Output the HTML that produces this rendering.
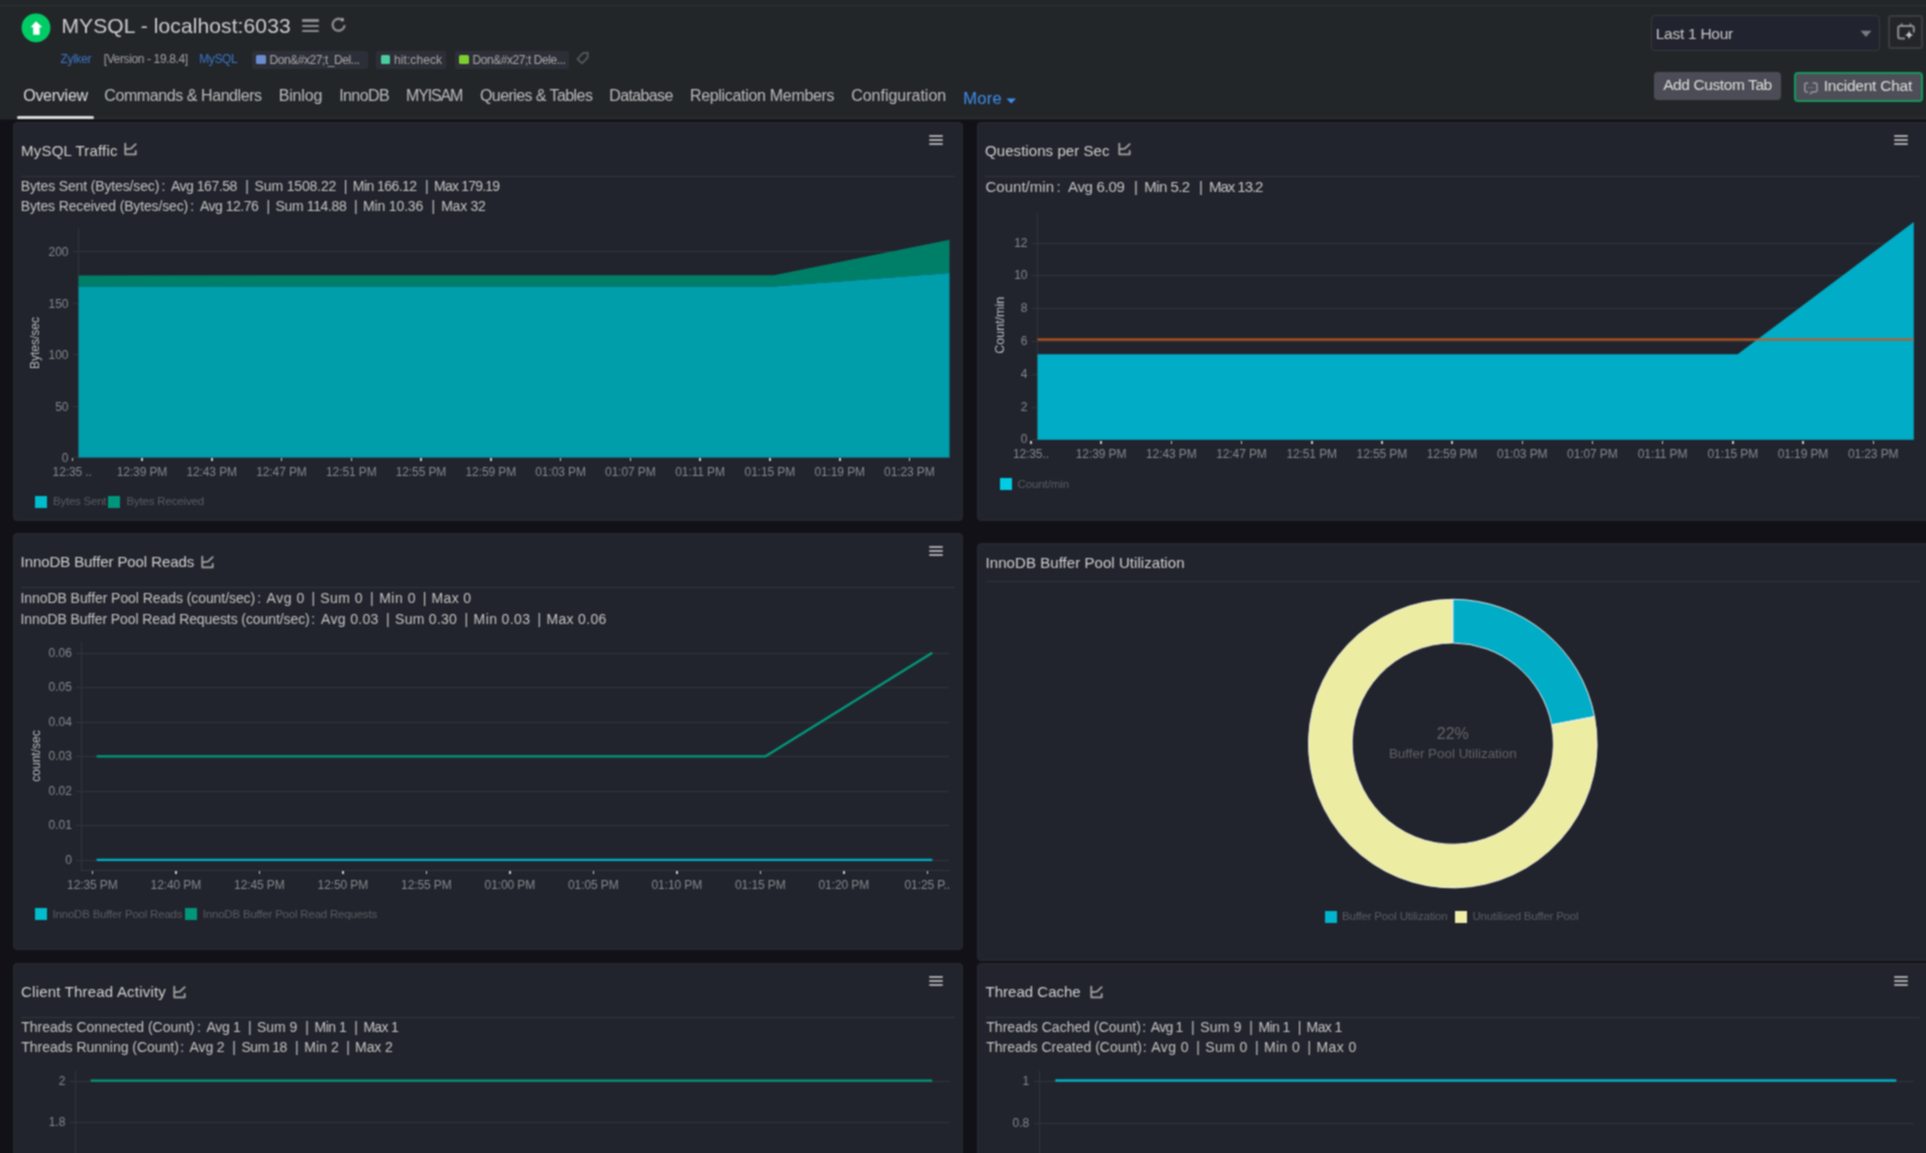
<!DOCTYPE html><html><head><meta charset="utf-8"><style>
html,body{margin:0;padding:0;background:#111117;}
#root{position:relative;filter:url(#gb);width:1926px;height:1153px;overflow:hidden;background:#111117;font-family:"Liberation Sans",sans-serif;}
.t{position:absolute;white-space:nowrap;line-height:1;}
.r{position:absolute;}
svg{position:absolute;overflow:visible;}
</style></head><body><svg width="0" height="0" style="position:absolute"><filter id="gb" x="0" y="0" width="100%" height="100%" color-interpolation-filters="sRGB"><feConvolveMatrix order="3" kernelMatrix="1 2 1 2 4 2 1 2 1" divisor="16" edgeMode="duplicate"/></filter></svg><div id="root">
<div class="r" style="left:0px;top:0px;width:1926px;height:120px;background:#232629;"></div>
<div class="r" style="left:0px;top:5px;width:1926px;height:1px;background:#2f3134;"></div>
<svg style="left:21px;top:13px" width="30" height="30" viewBox="0 0 30 30"><circle cx="15" cy="14.8" r="14.4" fill="#00cc66"/><path d="M15 8.2 L21.3 14.2 L18.6 14.2 L18.6 21.8 L12.2 21.8 L12.2 14.2 L9.6 14.2 Z" fill="#ffffff"/></svg>
<div class="t" style="left:61.5px;top:15.4px;font-size:21px;color:#cdcdcd;letter-spacing:0.108px;">MYSQL - localhost:6033</div>
<div class="r" style="left:302px;top:19.3px;width:17px;height:2.4px;background:#8a8b8c;border-radius:1px"></div>
<div class="r" style="left:302px;top:24.5px;width:17px;height:2.4px;background:#8a8b8c;border-radius:1px"></div>
<div class="r" style="left:302px;top:29.7px;width:17px;height:2.4px;background:#8a8b8c;border-radius:1px"></div>
<svg style="left:330px;top:17px" width="18" height="16" viewBox="0 0 18 16"><path d="M14.6 8.2 A6 6 0 1 1 10.6 2.1" fill="none" stroke="#8a8b8c" stroke-width="2.3"/><circle cx="12.2" cy="2.7" r="1.9" fill="#9a9b9c"/></svg>
<div class="t" style="left:60.4px;top:53.0px;font-size:12px;color:#3a74c8;letter-spacing:-0.293px;">Zylker</div>
<div class="t" style="left:103.7px;top:53.0px;font-size:12px;color:#a0a0a0;letter-spacing:-0.372px;">[Version - 19.8.4]</div>
<div class="t" style="left:199.2px;top:53.0px;font-size:12px;color:#3a74c8;letter-spacing:-0.402px;">MySQL</div>
<div class="r" style="left:251.6px;top:51px;width:116.4px;height:18px;background:#2c2f37;border-radius:2px"></div>
<div class="r" style="left:256.4px;top:55.3px;width:9.2px;height:9px;background:#6a8cce;border-radius:1.5px"></div>
<div class="t" style="left:269.5px;top:53.6px;font-size:12px;color:#a8a8a8;letter-spacing:-0.437px;">Don&amp;#x27;t_Del...</div>
<div class="r" style="left:376px;top:51px;width:69.6px;height:18px;background:#2c2f37;border-radius:2px"></div>
<div class="r" style="left:380.8px;top:55.3px;width:9.2px;height:9px;background:#4bcca0;border-radius:1.5px"></div>
<div class="t" style="left:393.9px;top:53.6px;font-size:12px;color:#a8a8a8;letter-spacing:0.106px;">hit:check</div>
<div class="r" style="left:454.6px;top:51px;width:114.7px;height:18px;background:#2c2f37;border-radius:2px"></div>
<div class="r" style="left:459.40000000000003px;top:55.3px;width:9.2px;height:9px;background:#7ccf2e;border-radius:1.5px"></div>
<div class="t" style="left:472.5px;top:53.6px;font-size:12px;color:#a8a8a8;letter-spacing:-0.437px;">Don&amp;#x27;t Dele...</div>
<svg style="left:574px;top:49px" width="18" height="18" viewBox="0 0 18 18"><path d="M3.4 10 L9 4.1 L13.8 3.6 L13.6 8.6 L8 14.4 Z" fill="none" stroke="#55585b" stroke-width="1.8" stroke-linejoin="round"/></svg>
<div class="t" style="left:23.2px;top:87.6px;font-size:16px;color:#dcdcdc;letter-spacing:-0.254px;">Overview</div>
<div class="t" style="left:104.3px;top:87.6px;font-size:16px;color:#bcbcbc;letter-spacing:-0.422px;">Commands &amp; Handlers</div>
<div class="t" style="left:278.7px;top:87.6px;font-size:16px;color:#bcbcbc;letter-spacing:-0.155px;">Binlog</div>
<div class="t" style="left:339.2px;top:87.6px;font-size:16px;color:#bcbcbc;letter-spacing:-0.593px;">InnoDB</div>
<div class="t" style="left:406.0px;top:87.6px;font-size:16px;color:#bcbcbc;letter-spacing:-1.144px;">MYISAM</div>
<div class="t" style="left:480.0px;top:87.6px;font-size:16px;color:#bcbcbc;letter-spacing:-0.576px;">Queries &amp; Tables</div>
<div class="t" style="left:609.3px;top:87.6px;font-size:16px;color:#bcbcbc;letter-spacing:-0.642px;">Database</div>
<div class="t" style="left:689.9px;top:87.6px;font-size:16px;color:#bcbcbc;letter-spacing:-0.31px;">Replication Members</div>
<div class="t" style="left:851.2px;top:87.6px;font-size:16px;color:#bcbcbc;letter-spacing:-0.014px;">Configuration</div>
<div class="t" style="left:963.2px;top:89.6px;font-size:16.5px;color:#3d8ff0;letter-spacing:0.286px;">More</div>
<svg style="left:1006px;top:98px" width="11" height="6" viewBox="0 0 11 6"><path d="M0.5 0.5 L10 0.5 L5.25 5.5 Z" fill="#3d8ff0"/></svg>
<div class="r" style="left:17px;top:116px;width:77px;height:3px;background:#d5d7d7;border-radius:1.5px"></div>
<div class="r" style="left:94px;top:117px;width:1832px;height:2px;background:#282b2e;"></div>
<div class="r" style="left:0px;top:119px;width:1926px;height:1px;background:#1a1b1f;"></div>
<div class="r" style="left:1651px;top:15px;width:229px;height:36px;background:#21242e;box-sizing:border-box;border:1px solid #35383d;border-radius:4px"></div>
<div class="t" style="left:1655.7px;top:25.8px;font-size:15.5px;color:#c8c8c8;letter-spacing:-0.258px;">Last 1 Hour</div>
<svg style="left:1860px;top:30px" width="12" height="8" viewBox="0 0 12 8"><path d="M0.5 0.8 L11.5 0.8 L6 7 Z" fill="#777a7e"/></svg>
<div class="r" style="left:1888px;top:14.5px;width:35px;height:34.5px;background:transparent;box-sizing:border-box;border:2px solid #393b40;border-radius:3px"></div>
<svg style="left:1896px;top:22px" width="20" height="20" viewBox="0 0 20 20"><path d="M9 16.6 H4.2 Q2.2 16.6 2.2 14.6 V6 Q2.2 4 4.2 4 H15.8 Q17.8 4 17.8 6 V10.5" fill="none" stroke="#8a8c8e" stroke-width="2"/><path d="M5.7 1.6 V4 M14.4 1.6 V4" stroke="#8a8c8e" stroke-width="2"/><path d="M13.1 8.2 Q13.6 12.3 17.4 12.9 Q13.6 13.5 13.1 17.6 Q12.6 13.5 8.8 12.9 Q12.6 12.3 13.1 8.2 Z" fill="#c4c4c4"/></svg>
<div class="r" style="left:1654px;top:71.5px;width:127px;height:28.5px;background:#4b4c55;border-radius:4px"></div>
<div class="t" style="left:1663.2px;top:77.3px;font-size:15.5px;color:#dedede;letter-spacing:-0.404px;">Add Custom Tab</div>
<div class="r" style="left:1794px;top:71.5px;width:129px;height:30.5px;background:#4e4e58;box-sizing:border-box;border:2px solid #13985a;border-radius:4px"></div>
<svg style="left:1803px;top:82px" width="16" height="14" viewBox="0 0 16 14"><path d="M5 9.8 H3.4 Q1.8 9.8 1.8 8.2 V2.8 Q1.8 1.2 3.4 1.2 H5.2 M9.6 1.2 H12.4 Q14 1.2 14 2.8 V8.2 Q14 9.8 12.4 9.8 H10 Q8 9.8 7.2 12.2" fill="none" stroke="#8e8f95" stroke-width="1.7"/><path d="M5 5.6 H11" stroke="#6e6f75" stroke-width="1.2"/></svg>
<div class="t" style="left:1823.7px;top:78.3px;font-size:15.5px;color:#dedede;letter-spacing:-0.232px;">Incident Chat</div>
<div class="r" style="left:13px;top:122px;width:950px;height:398.5px;background:#21242c;border-radius:4px;box-sizing:border-box;border:1px solid #272a30"></div>
<div class="r" style="left:977px;top:122px;width:960px;height:398.5px;background:#21242c;border-radius:4px;box-sizing:border-box;border:1px solid #272a30"></div>
<div class="r" style="left:13px;top:533px;width:950px;height:416.5px;background:#21242c;border-radius:4px;box-sizing:border-box;border:1px solid #272a30"></div>
<div class="r" style="left:977px;top:543.3px;width:960px;height:417.7px;background:#21242c;border-radius:4px;box-sizing:border-box;border:1px solid #272a30"></div>
<div class="r" style="left:13px;top:963px;width:950px;height:300px;background:#21242c;border-radius:4px;box-sizing:border-box;border:1px solid #272a30"></div>
<div class="r" style="left:977px;top:963px;width:960px;height:300px;background:#21242c;border-radius:4px;box-sizing:border-box;border:1px solid #272a30"></div>
<div class="t" style="left:21.1px;top:142.7px;font-size:15px;color:#d0d0d0;letter-spacing:0.184px;">MySQL Traffic</div>
<svg style="left:124px;top:142px" width="14" height="14" viewBox="0 0 14 14"><path d="M1.3 1.6 V12.3 H11.7 V9" fill="none" stroke="#a3a3a3" stroke-width="1.8" stroke-linejoin="round" stroke-linecap="round"/><path d="M2.7 7.1 L6.9 6.7 L11.7 2.1" fill="none" stroke="#a3a3a3" stroke-width="1.8" stroke-linejoin="round" stroke-linecap="round"/></svg>
<div class="r" style="left:929px;top:134.5px;width:14px;height:2px;background:#a6a7aa;border-radius:1px"></div>
<div class="r" style="left:929px;top:138.9px;width:14px;height:2px;background:#a6a7aa;border-radius:1px"></div>
<div class="r" style="left:929px;top:143.2px;width:14px;height:2px;background:#a6a7aa;border-radius:1px"></div>
<div class="r" style="left:21px;top:176px;width:934px;height:1px;background:#31343a;"></div>
<div class="t" style="left:20.7px;top:178.7px;font-size:14px;color:#c4c4c4;letter-spacing:-0.138px;">Bytes Sent (Bytes/sec)</div>
<div class="t" style="left:161.4px;top:178.7px;font-size:14px;color:#c4c4c4;">:</div>
<div class="t" style="left:170.9px;top:178.7px;font-size:14px;color:#c4c4c4;letter-spacing:-0.465px;">Avg 167.58</div>
<div class="t" style="left:245.3px;top:178.7px;font-size:14px;color:#c4c4c4;">|</div>
<div class="t" style="left:254.6px;top:178.7px;font-size:14px;color:#c4c4c4;letter-spacing:-0.148px;">Sum 1508.22</div>
<div class="t" style="left:343.8px;top:178.7px;font-size:14px;color:#c4c4c4;">|</div>
<div class="t" style="left:352.8px;top:178.7px;font-size:14px;color:#c4c4c4;letter-spacing:-0.552px;">Min 166.12</div>
<div class="t" style="left:424.9px;top:178.7px;font-size:14px;color:#c4c4c4;">|</div>
<div class="t" style="left:434.1px;top:178.7px;font-size:14px;color:#c4c4c4;letter-spacing:-0.807px;">Max 179.19</div>
<div class="t" style="left:20.7px;top:198.8px;font-size:14px;color:#c4c4c4;letter-spacing:-0.147px;">Bytes Received (Bytes/sec)</div>
<div class="t" style="left:190.2px;top:198.8px;font-size:14px;color:#c4c4c4;">:</div>
<div class="t" style="left:200.0px;top:198.8px;font-size:14px;color:#c4c4c4;letter-spacing:-0.499px;">Avg 12.76</div>
<div class="t" style="left:266.5px;top:198.8px;font-size:14px;color:#c4c4c4;">|</div>
<div class="t" style="left:275.6px;top:198.8px;font-size:14px;color:#c4c4c4;letter-spacing:-0.373px;">Sum 114.88</div>
<div class="t" style="left:354.1px;top:198.8px;font-size:14px;color:#c4c4c4;">|</div>
<div class="t" style="left:363.0px;top:198.8px;font-size:14px;color:#c4c4c4;letter-spacing:-0.148px;">Min 10.36</div>
<div class="t" style="left:431.6px;top:198.8px;font-size:14px;color:#c4c4c4;">|</div>
<div class="t" style="left:441.2px;top:198.8px;font-size:14px;color:#c4c4c4;letter-spacing:-0.242px;">Max 32</div>
<div class="r" style="left:73px;top:251.3px;width:876.5px;height:1px;background:#30333a;"></div>
<div class="r" style="left:73px;top:302.7px;width:876.5px;height:1px;background:#30333a;"></div>
<div class="r" style="left:73px;top:354.1px;width:876.5px;height:1px;background:#30333a;"></div>
<div class="r" style="left:73px;top:405.6px;width:876.5px;height:1px;background:#30333a;"></div>
<div class="r" style="left:73px;top:457.0px;width:876.5px;height:1px;background:#30333a;"></div>
<div class="r" style="left:78px;top:228px;width:1px;height:230px;background:#30333a;"></div>
<svg style="left:0;top:0" width="1926" height="1153" viewBox="0 0 1926 1153"><polygon points="78.5,275.4 774,275.2 949.5,239.8 949.5,273 774,286.4 78.5,286.4" fill="#007f68"/><polygon points="78.5,286.4 774,286.4 949.5,273 949.5,457.5 78.5,457.5" fill="#009dab"/></svg>
<div class="t" style="left:-11.5px;width:80px;text-align:right;top:246.3px;font-size:12px;color:#85888c">200</div>
<div class="t" style="left:-11.5px;width:80px;text-align:right;top:297.7px;font-size:12px;color:#85888c">150</div>
<div class="t" style="left:-11.5px;width:80px;text-align:right;top:349.1px;font-size:12px;color:#85888c">100</div>
<div class="t" style="left:-11.5px;width:80px;text-align:right;top:400.6px;font-size:12px;color:#85888c">50</div>
<div class="t" style="left:-11.5px;width:80px;text-align:right;top:452.0px;font-size:12px;color:#85888c">0</div>
<div class="t" style="left:-25px;top:337.0px;width:120px;text-align:center;font-size:12px;color:#b9bcc0;transform:rotate(-90deg);transform-origin:60px 6.0px">Bytes/sec</div>
<div class="r" style="left:71.5px;top:458px;width:1.5px;height:3px;background:#c9c9c9;"></div>
<div class="r" style="left:141.3px;top:458px;width:1.5px;height:3px;background:#c9c9c9;"></div>
<div class="r" style="left:211.0px;top:458px;width:1.5px;height:3px;background:#c9c9c9;"></div>
<div class="r" style="left:280.8px;top:458px;width:1.5px;height:3px;background:#c9c9c9;"></div>
<div class="r" style="left:350.6px;top:458px;width:1.5px;height:3px;background:#c9c9c9;"></div>
<div class="r" style="left:420.3px;top:458px;width:1.5px;height:3px;background:#c9c9c9;"></div>
<div class="r" style="left:490.1px;top:458px;width:1.5px;height:3px;background:#c9c9c9;"></div>
<div class="r" style="left:559.9px;top:458px;width:1.5px;height:3px;background:#c9c9c9;"></div>
<div class="r" style="left:629.7px;top:458px;width:1.5px;height:3px;background:#c9c9c9;"></div>
<div class="r" style="left:699.4px;top:458px;width:1.5px;height:3px;background:#c9c9c9;"></div>
<div class="r" style="left:769.2px;top:458px;width:1.5px;height:3px;background:#c9c9c9;"></div>
<div class="r" style="left:839.0px;top:458px;width:1.5px;height:3px;background:#c9c9c9;"></div>
<div class="r" style="left:908.7px;top:458px;width:1.5px;height:3px;background:#c9c9c9;"></div>
<div class="t" style="left:12.2px;width:120px;text-align:center;top:466.0px;font-size:12px;color:#85888c;letter-spacing:-0.1px">12:35 ..</div>
<div class="t" style="left:82.0px;width:120px;text-align:center;top:466.0px;font-size:12px;color:#85888c;letter-spacing:-0.1px">12:39 PM</div>
<div class="t" style="left:151.7px;width:120px;text-align:center;top:466.0px;font-size:12px;color:#85888c;letter-spacing:-0.1px">12:43 PM</div>
<div class="t" style="left:221.5px;width:120px;text-align:center;top:466.0px;font-size:12px;color:#85888c;letter-spacing:-0.1px">12:47 PM</div>
<div class="t" style="left:291.3px;width:120px;text-align:center;top:466.0px;font-size:12px;color:#85888c;letter-spacing:-0.1px">12:51 PM</div>
<div class="t" style="left:361.0px;width:120px;text-align:center;top:466.0px;font-size:12px;color:#85888c;letter-spacing:-0.1px">12:55 PM</div>
<div class="t" style="left:430.8px;width:120px;text-align:center;top:466.0px;font-size:12px;color:#85888c;letter-spacing:-0.1px">12:59 PM</div>
<div class="t" style="left:500.6px;width:120px;text-align:center;top:466.0px;font-size:12px;color:#85888c;letter-spacing:-0.1px">01:03 PM</div>
<div class="t" style="left:570.4px;width:120px;text-align:center;top:466.0px;font-size:12px;color:#85888c;letter-spacing:-0.1px">01:07 PM</div>
<div class="t" style="left:640.1px;width:120px;text-align:center;top:466.0px;font-size:12px;color:#85888c;letter-spacing:-0.1px">01:11 PM</div>
<div class="t" style="left:709.9px;width:120px;text-align:center;top:466.0px;font-size:12px;color:#85888c;letter-spacing:-0.1px">01:15 PM</div>
<div class="t" style="left:779.7px;width:120px;text-align:center;top:466.0px;font-size:12px;color:#85888c;letter-spacing:-0.1px">01:19 PM</div>
<div class="t" style="left:849.4px;width:120px;text-align:center;top:466.0px;font-size:12px;color:#85888c;letter-spacing:-0.1px">01:23 PM</div>
<div class="r" style="left:35px;top:496.2px;width:12px;height:12px;background:#00bccd;"></div>
<div class="t" style="left:53.0px;top:495.8px;font-size:11.5px;color:#595c62;letter-spacing:-0.229px;">Bytes Sent</div>
<div class="r" style="left:108.2px;top:496.2px;width:12px;height:12px;background:#00967a;"></div>
<div class="t" style="left:126.4px;top:495.8px;font-size:11.5px;color:#595c62;letter-spacing:-0.165px;">Bytes Received</div>
<div class="t" style="left:985.0px;top:143.4px;font-size:15px;color:#d0d0d0;letter-spacing:0.069px;">Questions per Sec</div>
<svg style="left:1117.5px;top:142px" width="14" height="14" viewBox="0 0 14 14"><path d="M1.3 1.6 V12.3 H11.7 V9" fill="none" stroke="#a3a3a3" stroke-width="1.8" stroke-linejoin="round" stroke-linecap="round"/><path d="M2.7 7.1 L6.9 6.7 L11.7 2.1" fill="none" stroke="#a3a3a3" stroke-width="1.8" stroke-linejoin="round" stroke-linecap="round"/></svg>
<div class="r" style="left:1893.8px;top:134.5px;width:14px;height:2px;background:#a6a7aa;border-radius:1px"></div>
<div class="r" style="left:1893.8px;top:138.9px;width:14px;height:2px;background:#a6a7aa;border-radius:1px"></div>
<div class="r" style="left:1893.8px;top:143.2px;width:14px;height:2px;background:#a6a7aa;border-radius:1px"></div>
<div class="r" style="left:985px;top:176px;width:934.5px;height:1px;background:#31343a;"></div>
<div class="t" style="left:985.5px;top:179.1px;font-size:15px;color:#c4c4c4;letter-spacing:0.017px;">Count/min</div>
<div class="t" style="left:1056.5px;top:179.1px;font-size:15px;color:#c4c4c4;">:</div>
<div class="t" style="left:1068.0px;top:179.1px;font-size:15px;color:#c4c4c4;letter-spacing:-0.305px;">Avg 6.09</div>
<div class="t" style="left:1133.9px;top:179.1px;font-size:15px;color:#c4c4c4;">|</div>
<div class="t" style="left:1144.3px;top:179.1px;font-size:15px;color:#c4c4c4;letter-spacing:-0.548px;">Min 5.2</div>
<div class="t" style="left:1198.9px;top:179.1px;font-size:15px;color:#c4c4c4;">|</div>
<div class="t" style="left:1209.0px;top:179.1px;font-size:15px;color:#c4c4c4;letter-spacing:-1.043px;">Max 13.2</div>
<div class="r" style="left:1032px;top:242.6px;width:882px;height:1px;background:#30333a;"></div>
<div class="r" style="left:1032px;top:275.4px;width:882px;height:1px;background:#30333a;"></div>
<div class="r" style="left:1032px;top:308.2px;width:882px;height:1px;background:#30333a;"></div>
<div class="r" style="left:1032px;top:341.0px;width:882px;height:1px;background:#30333a;"></div>
<div class="r" style="left:1032px;top:373.8px;width:882px;height:1px;background:#30333a;"></div>
<div class="r" style="left:1032px;top:406.6px;width:882px;height:1px;background:#30333a;"></div>
<div class="r" style="left:1032px;top:439.4px;width:882px;height:1px;background:#30333a;"></div>
<div class="r" style="left:1037px;top:212.6px;width:1px;height:227.4px;background:#30333a;"></div>
<svg style="left:0;top:0" width="1926" height="1153" viewBox="0 0 1926 1153"><polygon points="1037.5,354.2 1737.6,354.2 1913.8,222 1913.8,439.8 1037.5,439.8" fill="#00acc6"/><line x1="1037.5" y1="339.6" x2="1913.8" y2="339.6" stroke="#c9581c" stroke-width="2"/></svg>
<div class="t" style="left:947.5px;width:80px;text-align:right;top:236.6px;font-size:12px;color:#85888c">12</div>
<div class="t" style="left:947.5px;width:80px;text-align:right;top:269.4px;font-size:12px;color:#85888c">10</div>
<div class="t" style="left:947.5px;width:80px;text-align:right;top:302.2px;font-size:12px;color:#85888c">8</div>
<div class="t" style="left:947.5px;width:80px;text-align:right;top:335.0px;font-size:12px;color:#85888c">6</div>
<div class="t" style="left:947.5px;width:80px;text-align:right;top:367.8px;font-size:12px;color:#85888c">4</div>
<div class="t" style="left:947.5px;width:80px;text-align:right;top:400.6px;font-size:12px;color:#85888c">2</div>
<div class="t" style="left:947.5px;width:80px;text-align:right;top:433.4px;font-size:12px;color:#85888c">0</div>
<div class="t" style="left:940.3px;top:319.1px;width:120px;text-align:center;font-size:12.5px;color:#b9bcc0;transform:rotate(-90deg);transform-origin:60px 6.25px">Count/min</div>
<div class="r" style="left:1030.2px;top:440.5px;width:1.5px;height:3px;background:#c9c9c9;"></div>
<div class="r" style="left:1100.4px;top:440.5px;width:1.5px;height:3px;background:#c9c9c9;"></div>
<div class="r" style="left:1170.6px;top:440.5px;width:1.5px;height:3px;background:#c9c9c9;"></div>
<div class="r" style="left:1240.8px;top:440.5px;width:1.5px;height:3px;background:#c9c9c9;"></div>
<div class="r" style="left:1311.0px;top:440.5px;width:1.5px;height:3px;background:#c9c9c9;"></div>
<div class="r" style="left:1381.2px;top:440.5px;width:1.5px;height:3px;background:#c9c9c9;"></div>
<div class="r" style="left:1451.3px;top:440.5px;width:1.5px;height:3px;background:#c9c9c9;"></div>
<div class="r" style="left:1521.5px;top:440.5px;width:1.5px;height:3px;background:#c9c9c9;"></div>
<div class="r" style="left:1591.7px;top:440.5px;width:1.5px;height:3px;background:#c9c9c9;"></div>
<div class="r" style="left:1661.9px;top:440.5px;width:1.5px;height:3px;background:#c9c9c9;"></div>
<div class="r" style="left:1732.1px;top:440.5px;width:1.5px;height:3px;background:#c9c9c9;"></div>
<div class="r" style="left:1802.3px;top:440.5px;width:1.5px;height:3px;background:#c9c9c9;"></div>
<div class="r" style="left:1872.5px;top:440.5px;width:1.5px;height:3px;background:#c9c9c9;"></div>
<div class="t" style="left:970.9px;width:120px;text-align:center;top:448.1px;font-size:12px;color:#85888c;letter-spacing:-0.1px">12:35..</div>
<div class="t" style="left:1041.1px;width:120px;text-align:center;top:448.1px;font-size:12px;color:#85888c;letter-spacing:-0.1px">12:39 PM</div>
<div class="t" style="left:1111.3px;width:120px;text-align:center;top:448.1px;font-size:12px;color:#85888c;letter-spacing:-0.1px">12:43 PM</div>
<div class="t" style="left:1181.5px;width:120px;text-align:center;top:448.1px;font-size:12px;color:#85888c;letter-spacing:-0.1px">12:47 PM</div>
<div class="t" style="left:1251.7px;width:120px;text-align:center;top:448.1px;font-size:12px;color:#85888c;letter-spacing:-0.1px">12:51 PM</div>
<div class="t" style="left:1321.9px;width:120px;text-align:center;top:448.1px;font-size:12px;color:#85888c;letter-spacing:-0.1px">12:55 PM</div>
<div class="t" style="left:1392.0px;width:120px;text-align:center;top:448.1px;font-size:12px;color:#85888c;letter-spacing:-0.1px">12:59 PM</div>
<div class="t" style="left:1462.2px;width:120px;text-align:center;top:448.1px;font-size:12px;color:#85888c;letter-spacing:-0.1px">01:03 PM</div>
<div class="t" style="left:1532.4px;width:120px;text-align:center;top:448.1px;font-size:12px;color:#85888c;letter-spacing:-0.1px">01:07 PM</div>
<div class="t" style="left:1602.6px;width:120px;text-align:center;top:448.1px;font-size:12px;color:#85888c;letter-spacing:-0.1px">01:11 PM</div>
<div class="t" style="left:1672.8px;width:120px;text-align:center;top:448.1px;font-size:12px;color:#85888c;letter-spacing:-0.1px">01:15 PM</div>
<div class="t" style="left:1743.0px;width:120px;text-align:center;top:448.1px;font-size:12px;color:#85888c;letter-spacing:-0.1px">01:19 PM</div>
<div class="t" style="left:1813.2px;width:120px;text-align:center;top:448.1px;font-size:12px;color:#85888c;letter-spacing:-0.1px">01:23 PM</div>
<div class="r" style="left:999.5px;top:477.5px;width:12px;height:12px;background:#00cce4;"></div>
<div class="t" style="left:1017.6px;top:478.8px;font-size:11.5px;color:#595c62;letter-spacing:-0.12px;">Count/min</div>
<div class="t" style="left:20.6px;top:553.8px;font-size:15px;color:#d0d0d0;letter-spacing:-0.09px;">InnoDB Buffer Pool Reads</div>
<svg style="left:201px;top:554.5px" width="14" height="14" viewBox="0 0 14 14"><path d="M1.3 1.6 V12.3 H11.7 V9" fill="none" stroke="#a3a3a3" stroke-width="1.8" stroke-linejoin="round" stroke-linecap="round"/><path d="M2.7 7.1 L6.9 6.7 L11.7 2.1" fill="none" stroke="#a3a3a3" stroke-width="1.8" stroke-linejoin="round" stroke-linecap="round"/></svg>
<div class="r" style="left:929px;top:545.5px;width:14px;height:2px;background:#a6a7aa;border-radius:1px"></div>
<div class="r" style="left:929px;top:549.9px;width:14px;height:2px;background:#a6a7aa;border-radius:1px"></div>
<div class="r" style="left:929px;top:554.2px;width:14px;height:2px;background:#a6a7aa;border-radius:1px"></div>
<div class="r" style="left:21px;top:587.1px;width:934px;height:1px;background:#31343a;"></div>
<div class="t" style="left:20.5px;top:590.7px;font-size:14px;color:#c4c4c4;letter-spacing:-0.068px;">InnoDB Buffer Pool Reads (count/sec)</div>
<div class="t" style="left:257.2px;top:590.7px;font-size:14px;color:#c4c4c4;">:</div>
<div class="t" style="left:266.5px;top:590.7px;font-size:14px;color:#c4c4c4;letter-spacing:0.563px;">Avg 0</div>
<div class="t" style="left:311.5px;top:590.7px;font-size:14px;color:#c4c4c4;">|</div>
<div class="t" style="left:320.3px;top:590.7px;font-size:14px;color:#c4c4c4;letter-spacing:0.434px;">Sum 0</div>
<div class="t" style="left:370.1px;top:590.7px;font-size:14px;color:#c4c4c4;">|</div>
<div class="t" style="left:379.2px;top:590.7px;font-size:14px;color:#c4c4c4;letter-spacing:0.516px;">Min 0</div>
<div class="t" style="left:422.7px;top:590.7px;font-size:14px;color:#c4c4c4;">|</div>
<div class="t" style="left:431.5px;top:590.7px;font-size:14px;color:#c4c4c4;letter-spacing:0.369px;">Max 0</div>
<div class="t" style="left:20.5px;top:611.8px;font-size:14px;color:#c4c4c4;letter-spacing:-0.091px;">InnoDB Buffer Pool Read Requests (count/sec)</div>
<div class="t" style="left:311.3px;top:611.8px;font-size:14px;color:#c4c4c4;">:</div>
<div class="t" style="left:321.0px;top:611.8px;font-size:14px;color:#c4c4c4;letter-spacing:0.342px;">Avg 0.03</div>
<div class="t" style="left:386.0px;top:611.8px;font-size:14px;color:#c4c4c4;">|</div>
<div class="t" style="left:395.1px;top:611.8px;font-size:14px;color:#c4c4c4;letter-spacing:0.268px;">Sum 0.30</div>
<div class="t" style="left:464.5px;top:611.8px;font-size:14px;color:#c4c4c4;">|</div>
<div class="t" style="left:473.6px;top:611.8px;font-size:14px;color:#c4c4c4;letter-spacing:0.386px;">Min 0.03</div>
<div class="t" style="left:537.4px;top:611.8px;font-size:14px;color:#c4c4c4;">|</div>
<div class="t" style="left:546.4px;top:611.8px;font-size:14px;color:#c4c4c4;letter-spacing:0.331px;">Max 0.06</div>
<div class="r" style="left:76.4px;top:859.9px;width:873.1px;height:1px;background:#30333a;"></div>
<div class="r" style="left:76.4px;top:825.4px;width:873.1px;height:1px;background:#30333a;"></div>
<div class="r" style="left:76.4px;top:790.9px;width:873.1px;height:1px;background:#30333a;"></div>
<div class="r" style="left:76.4px;top:756.3px;width:873.1px;height:1px;background:#30333a;"></div>
<div class="r" style="left:76.4px;top:721.8px;width:873.1px;height:1px;background:#30333a;"></div>
<div class="r" style="left:76.4px;top:687.3px;width:873.1px;height:1px;background:#30333a;"></div>
<div class="r" style="left:76.4px;top:652.8px;width:873.1px;height:1px;background:#30333a;"></div>
<div class="r" style="left:80.5px;top:642px;width:1px;height:229px;background:#30333a;"></div>
<div class="r" style="left:80.5px;top:870.3px;width:869.0px;height:1px;background:#30333a;"></div>
<svg style="left:0;top:0" width="1926" height="1153" viewBox="0 0 1926 1153"><polyline points="96.6,756.4 765.2,756.4 932.3,652.8" fill="none" stroke="#009a7c" stroke-width="2.3" stroke-linejoin="round"/><line x1="96.6" y1="859.9" x2="932.3" y2="859.9" stroke="#00b0c8" stroke-width="2.3"/></svg>
<div class="t" style="left:-8.200000000000003px;width:80px;text-align:right;top:646.8px;font-size:12px;color:#85888c">0.06</div>
<div class="t" style="left:-8.200000000000003px;width:80px;text-align:right;top:681.3px;font-size:12px;color:#85888c">0.05</div>
<div class="t" style="left:-8.200000000000003px;width:80px;text-align:right;top:715.8px;font-size:12px;color:#85888c">0.04</div>
<div class="t" style="left:-8.200000000000003px;width:80px;text-align:right;top:750.3px;font-size:12px;color:#85888c">0.03</div>
<div class="t" style="left:-8.200000000000003px;width:80px;text-align:right;top:784.9px;font-size:12px;color:#85888c">0.02</div>
<div class="t" style="left:-8.200000000000003px;width:80px;text-align:right;top:819.4px;font-size:12px;color:#85888c">0.01</div>
<div class="t" style="left:-8.200000000000003px;width:80px;text-align:right;top:853.9px;font-size:12px;color:#85888c">0</div>
<div class="t" style="left:-23.6px;top:749.8px;width:120px;text-align:center;font-size:12px;color:#b9bcc0;transform:rotate(-90deg);transform-origin:60px 6.0px">count/sec</div>
<div class="r" style="left:91.7px;top:871px;width:1.5px;height:3px;background:#c9c9c9;"></div>
<div class="r" style="left:175.2px;top:871px;width:1.5px;height:3px;background:#c9c9c9;"></div>
<div class="r" style="left:258.7px;top:871px;width:1.5px;height:3px;background:#c9c9c9;"></div>
<div class="r" style="left:342.2px;top:871px;width:1.5px;height:3px;background:#c9c9c9;"></div>
<div class="r" style="left:425.7px;top:871px;width:1.5px;height:3px;background:#c9c9c9;"></div>
<div class="r" style="left:509.2px;top:871px;width:1.5px;height:3px;background:#c9c9c9;"></div>
<div class="r" style="left:592.6px;top:871px;width:1.5px;height:3px;background:#c9c9c9;"></div>
<div class="r" style="left:676.1px;top:871px;width:1.5px;height:3px;background:#c9c9c9;"></div>
<div class="r" style="left:759.6px;top:871px;width:1.5px;height:3px;background:#c9c9c9;"></div>
<div class="r" style="left:843.1px;top:871px;width:1.5px;height:3px;background:#c9c9c9;"></div>
<div class="r" style="left:926.6px;top:871px;width:1.5px;height:3px;background:#c9c9c9;"></div>
<div class="t" style="left:32.4px;width:120px;text-align:center;top:878.8px;font-size:12px;color:#85888c;letter-spacing:-0.1px">12:35 PM</div>
<div class="t" style="left:115.9px;width:120px;text-align:center;top:878.8px;font-size:12px;color:#85888c;letter-spacing:-0.1px">12:40 PM</div>
<div class="t" style="left:199.4px;width:120px;text-align:center;top:878.8px;font-size:12px;color:#85888c;letter-spacing:-0.1px">12:45 PM</div>
<div class="t" style="left:282.9px;width:120px;text-align:center;top:878.8px;font-size:12px;color:#85888c;letter-spacing:-0.1px">12:50 PM</div>
<div class="t" style="left:366.4px;width:120px;text-align:center;top:878.8px;font-size:12px;color:#85888c;letter-spacing:-0.1px">12:55 PM</div>
<div class="t" style="left:449.9px;width:120px;text-align:center;top:878.8px;font-size:12px;color:#85888c;letter-spacing:-0.1px">01:00 PM</div>
<div class="t" style="left:533.3px;width:120px;text-align:center;top:878.8px;font-size:12px;color:#85888c;letter-spacing:-0.1px">01:05 PM</div>
<div class="t" style="left:616.8px;width:120px;text-align:center;top:878.8px;font-size:12px;color:#85888c;letter-spacing:-0.1px">01:10 PM</div>
<div class="t" style="left:700.3px;width:120px;text-align:center;top:878.8px;font-size:12px;color:#85888c;letter-spacing:-0.1px">01:15 PM</div>
<div class="t" style="left:783.8px;width:120px;text-align:center;top:878.8px;font-size:12px;color:#85888c;letter-spacing:-0.1px">01:20 PM</div>
<div class="t" style="left:867.3px;width:120px;text-align:center;top:878.8px;font-size:12px;color:#85888c;letter-spacing:-0.1px">01:25 P..</div>
<div class="r" style="left:34.6px;top:908.4px;width:12px;height:12px;background:#00bccd;"></div>
<div class="t" style="left:52.5px;top:909.2px;font-size:11.5px;color:#595c62;letter-spacing:-0.201px;">InnoDB Buffer Pool Reads</div>
<div class="r" style="left:185.3px;top:908.4px;width:12px;height:12px;background:#00967a;"></div>
<div class="t" style="left:202.8px;top:909.2px;font-size:11.5px;color:#595c62;letter-spacing:-0.205px;">InnoDB Buffer Pool Read Requests</div>
<div class="t" style="left:985.6px;top:554.5px;font-size:15px;color:#d0d0d0;letter-spacing:0.054px;">InnoDB Buffer Pool Utilization</div>
<div class="r" style="left:986px;top:581px;width:933.5px;height:1px;background:#31343a;"></div>
<svg style="left:0;top:0" width="1926" height="1153" viewBox="0 0 1926 1153"><path d="M1594.54,716.56 A144.3,144.3 0 1 1 1452.80,599.30 L1452.80,643.00 A100.6,100.6 0 1 0 1551.62,724.75 Z" fill="#ececa2" stroke="#ffffff" stroke-opacity="0.8" stroke-width="1"/><path d="M1452.80,599.30 A144.3,144.3 0 0 1 1594.54,716.56 L1551.62,724.75 A100.6,100.6 0 0 0 1452.80,643.00 Z" fill="#00acc6" stroke="#ffffff" stroke-opacity="0.85" stroke-width="1"/><path d="M1452.80,599.30 L1452.80,643.00 M1594.54,716.56 L1551.62,724.75" stroke="#e8e8e8" stroke-width="1"/></svg>
<div class="t" style="left:1352.8px;width:200px;text-align:center;top:726.2px;font-size:16px;color:#646568">22%</div>
<div class="t" style="left:1352.8px;width:200px;text-align:center;top:747.4px;font-size:13.4px;color:#616265">Buffer Pool Utilization</div>
<div class="r" style="left:1324.8px;top:910.5px;width:12px;height:12px;background:#00b4cc;"></div>
<div class="t" style="left:1342.0px;top:911.4px;font-size:11.5px;color:#595c62;letter-spacing:-0.186px;">Buffer Pool Utilization</div>
<div class="r" style="left:1455px;top:910.5px;width:12px;height:12px;background:#f0eea8;"></div>
<div class="t" style="left:1472.4px;top:911.4px;font-size:11.5px;color:#595c62;letter-spacing:-0.201px;">Unutilised Buffer Pool</div>
<div class="t" style="left:21.1px;top:984.1px;font-size:15px;color:#d0d0d0;letter-spacing:0.194px;">Client Thread Activity</div>
<svg style="left:173px;top:984.5px" width="14" height="14" viewBox="0 0 14 14"><path d="M1.3 1.6 V12.3 H11.7 V9" fill="none" stroke="#a3a3a3" stroke-width="1.8" stroke-linejoin="round" stroke-linecap="round"/><path d="M2.7 7.1 L6.9 6.7 L11.7 2.1" fill="none" stroke="#a3a3a3" stroke-width="1.8" stroke-linejoin="round" stroke-linecap="round"/></svg>
<div class="r" style="left:928.8px;top:975.5px;width:14px;height:2px;background:#a6a7aa;border-radius:1px"></div>
<div class="r" style="left:928.8px;top:979.9px;width:14px;height:2px;background:#a6a7aa;border-radius:1px"></div>
<div class="r" style="left:928.8px;top:984.2px;width:14px;height:2px;background:#a6a7aa;border-radius:1px"></div>
<div class="r" style="left:21px;top:1017.3px;width:934px;height:1px;background:#31343a;"></div>
<div class="t" style="left:21.3px;top:1020.4px;font-size:14px;color:#c4c4c4;letter-spacing:-0.014px;">Threads Connected (Count)</div>
<div class="t" style="left:196.9px;top:1020.4px;font-size:14px;color:#c4c4c4;">:</div>
<div class="t" style="left:206.6px;top:1020.4px;font-size:14px;color:#c4c4c4;letter-spacing:-0.337px;">Avg 1</div>
<div class="t" style="left:248.1px;top:1020.4px;font-size:14px;color:#c4c4c4;">|</div>
<div class="t" style="left:256.9px;top:1020.4px;font-size:14px;color:#c4c4c4;letter-spacing:-0.016px;">Sum 9</div>
<div class="t" style="left:305.3px;top:1020.4px;font-size:14px;color:#c4c4c4;">|</div>
<div class="t" style="left:314.6px;top:1020.4px;font-size:14px;color:#c4c4c4;letter-spacing:-0.534px;">Min 1</div>
<div class="t" style="left:354.3px;top:1020.4px;font-size:14px;color:#c4c4c4;">|</div>
<div class="t" style="left:363.4px;top:1020.4px;font-size:14px;color:#c4c4c4;letter-spacing:-0.706px;">Max 1</div>
<div class="t" style="left:21.3px;top:1039.8px;font-size:14px;color:#c4c4c4;letter-spacing:-0.017px;">Threads Running (Count)</div>
<div class="t" style="left:180.3px;top:1039.8px;font-size:14px;color:#c4c4c4;">:</div>
<div class="t" style="left:189.6px;top:1039.8px;font-size:14px;color:#c4c4c4;letter-spacing:-0.137px;">Avg 2</div>
<div class="t" style="left:232.3px;top:1039.8px;font-size:14px;color:#c4c4c4;">|</div>
<div class="t" style="left:241.5px;top:1039.8px;font-size:14px;color:#c4c4c4;letter-spacing:-0.49px;">Sum 18</div>
<div class="t" style="left:295.0px;top:1039.8px;font-size:14px;color:#c4c4c4;">|</div>
<div class="t" style="left:304.2px;top:1039.8px;font-size:14px;color:#c4c4c4;letter-spacing:0.091px;">Min 2</div>
<div class="t" style="left:346.2px;top:1039.8px;font-size:14px;color:#c4c4c4;">|</div>
<div class="t" style="left:355.1px;top:1039.8px;font-size:14px;color:#c4c4c4;letter-spacing:-0.106px;">Max 2</div>
<div class="r" style="left:70px;top:1081px;width:879.5px;height:1px;background:#30333a;"></div>
<div class="r" style="left:70px;top:1122.2px;width:879.5px;height:1px;background:#30333a;"></div>
<div class="r" style="left:74.8px;top:1071.3px;width:1px;height:81.7px;background:#30333a;"></div>
<svg style="left:0;top:0" width="1926" height="1153" viewBox="0 0 1926 1153"><line x1="90.6" y1="1080.6" x2="932.2" y2="1080.6" stroke="#009a7c" stroke-width="2.3"/></svg>
<div class="t" style="left:-14.700000000000003px;width:80px;text-align:right;top:1075.0px;font-size:12px;color:#85888c">2</div>
<div class="t" style="left:-14.700000000000003px;width:80px;text-align:right;top:1116.2px;font-size:12px;color:#85888c">1.8</div>
<div class="t" style="left:985.6px;top:984.4px;font-size:15px;color:#d0d0d0;letter-spacing:0.004px;">Thread Cache</div>
<svg style="left:1089.5px;top:984.5px" width="14" height="14" viewBox="0 0 14 14"><path d="M1.3 1.6 V12.3 H11.7 V9" fill="none" stroke="#a3a3a3" stroke-width="1.8" stroke-linejoin="round" stroke-linecap="round"/><path d="M2.7 7.1 L6.9 6.7 L11.7 2.1" fill="none" stroke="#a3a3a3" stroke-width="1.8" stroke-linejoin="round" stroke-linecap="round"/></svg>
<div class="r" style="left:1893.7px;top:975.5px;width:14px;height:2px;background:#a6a7aa;border-radius:1px"></div>
<div class="r" style="left:1893.7px;top:979.9px;width:14px;height:2px;background:#a6a7aa;border-radius:1px"></div>
<div class="r" style="left:1893.7px;top:984.2px;width:14px;height:2px;background:#a6a7aa;border-radius:1px"></div>
<div class="r" style="left:986px;top:1016.9px;width:933.5px;height:1px;background:#31343a;"></div>
<div class="t" style="left:986.3px;top:1019.5px;font-size:14px;color:#c4c4c4;letter-spacing:0.02px;">Threads Cached (Count)</div>
<div class="t" style="left:1142.2px;top:1019.5px;font-size:14px;color:#c4c4c4;">:</div>
<div class="t" style="left:1150.8px;top:1019.5px;font-size:14px;color:#c4c4c4;letter-spacing:-0.737px;">Avg 1</div>
<div class="t" style="left:1191.1px;top:1019.5px;font-size:14px;color:#c4c4c4;">|</div>
<div class="t" style="left:1200.3px;top:1019.5px;font-size:14px;color:#c4c4c4;letter-spacing:0.184px;">Sum 9</div>
<div class="t" style="left:1249.2px;top:1019.5px;font-size:14px;color:#c4c4c4;">|</div>
<div class="t" style="left:1258.4px;top:1019.5px;font-size:14px;color:#c4c4c4;letter-spacing:-0.584px;">Min 1</div>
<div class="t" style="left:1297.7px;top:1019.5px;font-size:14px;color:#c4c4c4;">|</div>
<div class="t" style="left:1306.6px;top:1019.5px;font-size:14px;color:#c4c4c4;letter-spacing:-0.606px;">Max 1</div>
<div class="t" style="left:986.3px;top:1040.0px;font-size:14px;color:#c4c4c4;letter-spacing:-0.006px;">Threads Created (Count)</div>
<div class="t" style="left:1142.8px;top:1040.0px;font-size:14px;color:#c4c4c4;">:</div>
<div class="t" style="left:1151.3px;top:1040.0px;font-size:14px;color:#c4c4c4;letter-spacing:0.438px;">Avg 0</div>
<div class="t" style="left:1196.2px;top:1040.0px;font-size:14px;color:#c4c4c4;">|</div>
<div class="t" style="left:1205.2px;top:1040.0px;font-size:14px;color:#c4c4c4;letter-spacing:0.434px;">Sum 0</div>
<div class="t" style="left:1255.0px;top:1040.0px;font-size:14px;color:#c4c4c4;">|</div>
<div class="t" style="left:1264.0px;top:1040.0px;font-size:14px;color:#c4c4c4;letter-spacing:0.366px;">Min 0</div>
<div class="t" style="left:1307.4px;top:1040.0px;font-size:14px;color:#c4c4c4;">|</div>
<div class="t" style="left:1316.6px;top:1040.0px;font-size:14px;color:#c4c4c4;letter-spacing:0.369px;">Max 0</div>
<div class="r" style="left:1034px;top:1081px;width:880px;height:1px;background:#30333a;"></div>
<div class="r" style="left:1034px;top:1122.6px;width:880px;height:1px;background:#30333a;"></div>
<div class="r" style="left:1038.7px;top:1071.4px;width:1px;height:81.6px;background:#30333a;"></div>
<svg style="left:0;top:0" width="1926" height="1153" viewBox="0 0 1926 1153"><line x1="1055.3" y1="1080.5" x2="1896.3" y2="1080.5" stroke="#00b0c8" stroke-width="2.3"/></svg>
<div class="t" style="left:949.3px;width:80px;text-align:right;top:1075.0px;font-size:12px;color:#85888c">1</div>
<div class="t" style="left:949.3px;width:80px;text-align:right;top:1116.6px;font-size:12px;color:#85888c">0.8</div>
</div></body></html>
